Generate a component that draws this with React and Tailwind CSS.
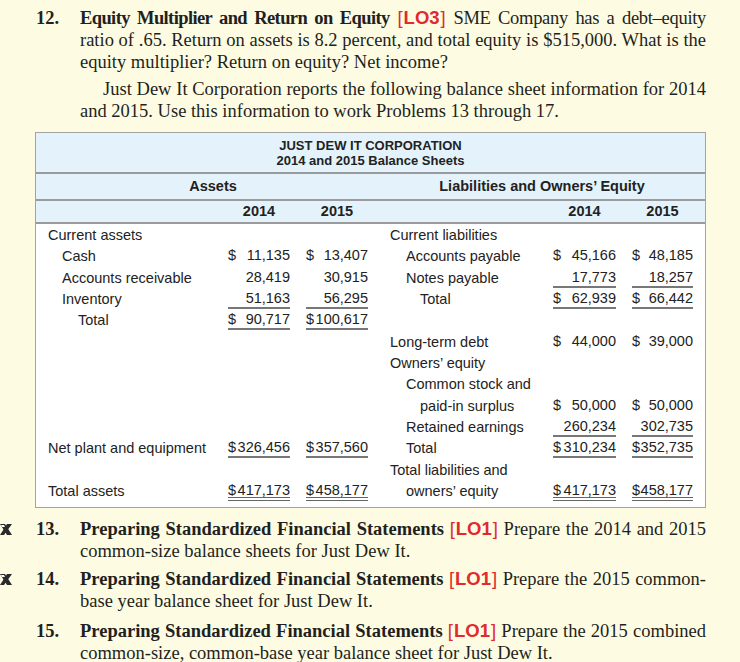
const serif = "font-['Liberation_Serif','Times_New_Roman',serif]";
const sans = "font-['Liberation_Sans',Arial,sans-serif]";

const rows = [
  { l: { t: "Current assets", i: 0 }, r: { t: "Current liabilities", i: 0 } },
  { l: { t: "Cash", i: 1, a: "$ 11,135", b: "$ 13,407" }, r: { t: "Accounts payable", i: 1, a: "$ 45,166", b: "$ 48,185" } },
  { l: { t: "Accounts receivable", i: 1, a: "28,419", b: "30,915" }, r: { t: "Notes payable", i: 1, a: "17,773", b: "18,257", u: "s" } },
  { l: { t: "Inventory", i: 1, a: "51,163", b: "56,295", u: "s" }, r: { t: "Total", i: 2, a: "$ 62,939", b: "$ 66,442", u: "s" } },
  { l: { t: "Total", i: 2, a: "$ 90,717", b: "$100,617", u: "s" }, r: {} },
  { l: {}, r: { t: "Long-term debt", i: 0, a: "$ 44,000", b: "$ 39,000" } },
  { l: {}, r: { t: "Owners’ equity", i: 0 } },
  { l: {}, r: { t: "Common stock and", i: 1 } },
  { l: {}, r: { t: "paid-in surplus", i: 2, a: "$ 50,000", b: "$ 50,000" } },
  { l: {}, r: { t: "Retained earnings", i: 1, a: "260,234", b: "302,735", u: "s" } },
  { l: { t: "Net plant and equipment", i: 0, a: "$326,456", b: "$357,560", u: "s" }, r: { t: "Total", i: 1, a: "$310,234", b: "$352,735", u: "s" } },
  { l: {}, r: { t: "Total liabilities and", i: 0 } },
  { l: { t: "Total assets", i: 0, a: "$417,173", b: "$458,177", u: "d" }, r: { t: "owners’ equity", i: 1, a: "$417,173", b: "$458,177", u: "d" } },
];

const indentL = ["pl-0", "pl-[14px]", "pl-[30px]"];
const indentR = ["pl-0", "pl-[16px]", "pl-[30px]"];

function Num({ v, u, w }) {
  const line = u === "d" ? "border-b-[4px] border-double border-[#666]" : u === "s" ? "border-b-[2px] border-[#777]" : "border-b-[2px] border-transparent";
  let dollar = null;
  let n = v;
  if (v && v.startsWith("$ ")) {
    dollar = "$";
    n = v.slice(2);
  } else if (v && v.startsWith("$")) {
    dollar = "$";
    n = v.slice(1);
  }
  return (
    <div className={`${w} flex items-center`}>
      {v && (
        <div className={`w-full h-[19px] leading-[17px] flex justify-between ${line}`}>
          <span>{dollar}</span>
          <span>{n}</span>
        </div>
      )}
    </div>
  );
}

function Row({ row }) {
  const { l, r } = row;
  return (
    <div className="flex h-[21.33px] items-center">
      <div className={`w-[180px] ${indentL[l.i || 0]}`}>{l.t}</div>
      <Num v={l.a} u={l.u} w="w-[62px]" />
      <div className="w-[16px]" />
      <Num v={l.b} u={l.u} w="w-[62px]" />
      <div className="w-[22px]" />
      <div className={`w-[163px] ${indentR[r.i || 0]}`}>{r.t}</div>
      <Num v={r.a} u={r.u} w="w-[63px]" />
      <div className="w-[16px]" />
      <Num v={r.b} u={r.u} w="w-[61px]" />
    </div>
  );
}

function LO({ n }) {
  return (
    <span className={`${sans} text-[#e02a2e] text-[18.5px] leading-[20px]`}>
      [<span className="font-bold px-[1px]">LO{n}</span>]
    </span>
  );
}

function Mark() {
  return (
    <svg width="13" height="12" viewBox="0 0 13 12" className="absolute left-0 top-[6px]">
      <path d="M0 0 L5 0 L12 11 L7 11 Z" fill="#2a2a2a" />
      <path d="M12 0 L7 0 L0 11 L4 11 Z" fill="#2a2a2a" />
      <path d="M1 1 L4 1 L5 3 L2 3 Z" fill="#ffffff" />
    </svg>
  );
}

function Problem({ num, title, lo, mark, tight, children }) {
  return (
    <div className="relative flex pl-[36px] pr-[34px]">
      {mark && <Mark />}
      <div className="w-[44px] shrink-0 font-bold">{num}.</div>
      <div className="flex-1 text-justify">
        <span className={tight ? "font-bold tracking-[-0.6px]" : "font-bold"}>{title}</span> <LO n={lo} /> {children}
      </div>
    </div>
  );
}

export default function App() {
  return (
    <div className={`h-[662px] overflow-hidden bg-[#fdfce3] text-[#231f20] ${serif} text-[18.5px] leading-[22px] flex flex-col`}>
      <div className="pt-[7px]">
        <Problem num="12" title="Equity Multiplier and Return on Equity" lo="3" tight>
          <span className="tracking-[-0.3px]">SME Company has a debt–equity</span> ratio of .65. Return on assets is 8.2 percent, and total equity is $515,000. What is the equity multiplier? Return on equity? Net income?
        </Problem>
        <div className="pl-[80px] pr-[34px] mt-[5px] indent-[23px] text-justify">
          Just Dew It Corporation reports the following balance sheet information for 2014 and 2015. Use this information to work Problems 13 through 17.
        </div>
      </div>

      <div className={`mt-[10px] ml-[35px] w-[671px] border border-[#a3a3a3] bg-white ${sans} text-[14.5px] leading-[17px] text-[#222]`}>
        <div className="bg-[#e4f3fb] h-[39px] flex flex-col justify-center items-center text-[13px] leading-[15px] font-bold">
          <div>JUST DEW IT CORPORATION</div>
          <div>2014 and 2015 Balance Sheets</div>
        </div>
        <div className="bg-[#e4f3fb] border-t-2 border-[#9b9b9b] h-[27px] flex items-center font-bold">
          <div className="w-[354px] text-center">Assets</div>
          <div className="w-[304px] text-center">Liabilities and Owners’ Equity</div>
        </div>
        <div className="bg-[#e4f3fb] border-y-2 border-y-[#9b9b9b] h-[25px] flex items-center font-bold pl-[192px]">
          <div className="w-[62px] text-center">2014</div>
          <div className="w-[16px]" />
          <div className="w-[62px] text-center">2015</div>
          <div className="w-[185px]" />
          <div className="w-[63px] text-center">2014</div>
          <div className="w-[16px]" />
          <div className="w-[61px] text-center">2015</div>
        </div>
        <div className="pl-[12px] pt-[1px] pb-[5px]">
          {rows.map((row, i) => (
            <Row key={i} row={row} />
          ))}
        </div>
      </div>

      <div className="mt-[10px] flex flex-col">
        <Problem num="13" title="Preparing Standardized Financial Statements" lo="1" mark>
          Prepare the 2014 and 2015 common-size balance sheets for Just Dew It.
        </Problem>
        <div className="mt-[6px]">
          <Problem num="14" title="Preparing Standardized Financial Statements" lo="1" mark>
            Prepare the 2015 common-base year balance sheet for Just Dew It.
          </Problem>
        </div>
        <div className="mt-[8px]">
          <Problem num="15" title="Preparing Standardized Financial Statements" lo="1">
            Prepare the 2015 combined common-size, common-base year balance sheet for Just Dew It.
          </Problem>
        </div>
      </div>
      <div className="flex-1" />
      <div className="h-[5px] bg-[#ececec] shrink-0" />
    </div>
  );
}
